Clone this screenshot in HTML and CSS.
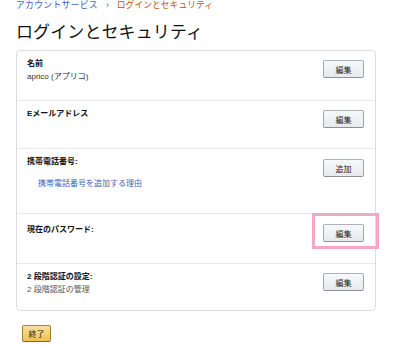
FILE: index.html
```html
<!DOCTYPE html>
<html lang="ja">
<head>
<meta charset="utf-8">
<link rel="stylesheet" href="styles.css">
</head>
<body>
<div class="page">
  <nav class="crumbs"><a class="crumb-link">アカウントサービス</a><span class="sep">›</span><span class="crumb-current">ログインとセキュリティ</span></nav>
  <h1 class="title">ログインとセキュリティ</h1>
  <div class="card">
    <div class="row row-name">
      <div class="info">
        <div class="label">名前</div>
        <div class="value">aprico (アプリコ)</div>
      </div>
      <button class="btn">編集</button>
    </div>
    <div class="row row-mail">
      <div class="info">
        <div class="label">Eメールアドレス</div>
      </div>
      <button class="btn">編集</button>
    </div>
    <div class="row row-phone">
      <div class="info">
        <div class="label">携帯電話番号:</div>
        <a class="why">携帯電話番号を追加する理由</a>
      </div>
      <button class="btn">追加</button>
    </div>
    <div class="row row-pass">
      <div class="info">
        <div class="label label-pass">現在のパスワード:</div>
      </div>
      <button class="btn">編集</button>
      <div class="highlight"></div>
    </div>
    <div class="row row-2fa">
      <div class="info">
        <div class="label">2 段階認証の設定:</div>
        <div class="value muted">2 段階認証の管理</div>
      </div>
      <button class="btn">編集</button>
    </div>
  </div>
  <button class="done">終了</button>
</div>
</body>
</html>
```
FILE: styles.css
```css
* { box-sizing: border-box; }
body {
  margin: 0;
  background: #fff;
  font-family: "Liberation Sans", "Noto Sans CJK JP", sans-serif;
  color: #111;
}
.page {
  padding: 0 24px 0 16px;
}
.crumbs {
  font-size: 8.8px;
  line-height: 10px;
  height: 10px;
  display: flex;
  align-items: center;
}
.crumb-link { color: #3f63b8; letter-spacing: 0.3px; }
.sep { color: #666; margin: 0 8px 0 8px; }
.crumb-current { color: #c45500; }
.title {
  margin: 12px 0 0;
  font-size: 17px;
  font-weight: 400;
  line-height: 21px;
  letter-spacing: 0.1px;
  color: #111;
}
.card {
  margin-top: 7px;
  border: 1px solid #ddd;
  border-radius: 4px;
  width: 360px;
}
.row {
  position: relative;
  display: flex;
  justify-content: space-between;
  align-items: flex-start;
  padding: 6px 11px 0 10px;
  border-top: 1px solid #e7e7e7;
}
.row:first-child { border-top: 0; }
.row-name { height: 49px; }
.row-mail { height: 48px; }
.row-phone { height: 65px; }
.row-pass { height: 50px; }
.row-2fa { height: 47px; }
.label {
  font-size: 8px;
  line-height: 13px;
  font-weight: 700;
}
.label-pass { padding-top: 3px; }
.value {
  font-size: 8px;
  line-height: 13px;
  color: #333;
}
.muted { color: #555; }
.why {
  display: block;
  margin: 9px 0 0 11px;
  font-size: 8px;
  line-height: 13px;
  color: #3f63b8;
}
.btn {
  margin-top: 3px;
  width: 41px;
  height: 18px;
  padding: 0;
  font-family: inherit;
  font-size: 8px;
  color: #222;
  border: 1px solid #adb1b8;
  border-color: #adb1b8 #a2a6ac #8d9096;
  border-radius: 2px;
  background: linear-gradient(#f7f8fa, #e7e9ec);
}
.row-phone .btn, .row-pass .btn { margin-top: 4px; }
.highlight {
  position: absolute;
  left: 295px;
  top: -1px;
  width: 67px;
  height: 36px;
  border: 3px solid #f3a9c6;
}
.done {
  margin: 14px 0 0 6px;
  width: 29px;
  height: 17px;
  padding: 0;
  font-family: inherit;
  font-size: 8px;
  color: #222;
  border: 1px solid #a88734;
  border-color: #a88734 #9c7e31 #846a29;
  border-radius: 2px;
  background: linear-gradient(#f7dfa5, #f0c14b);
}
```
